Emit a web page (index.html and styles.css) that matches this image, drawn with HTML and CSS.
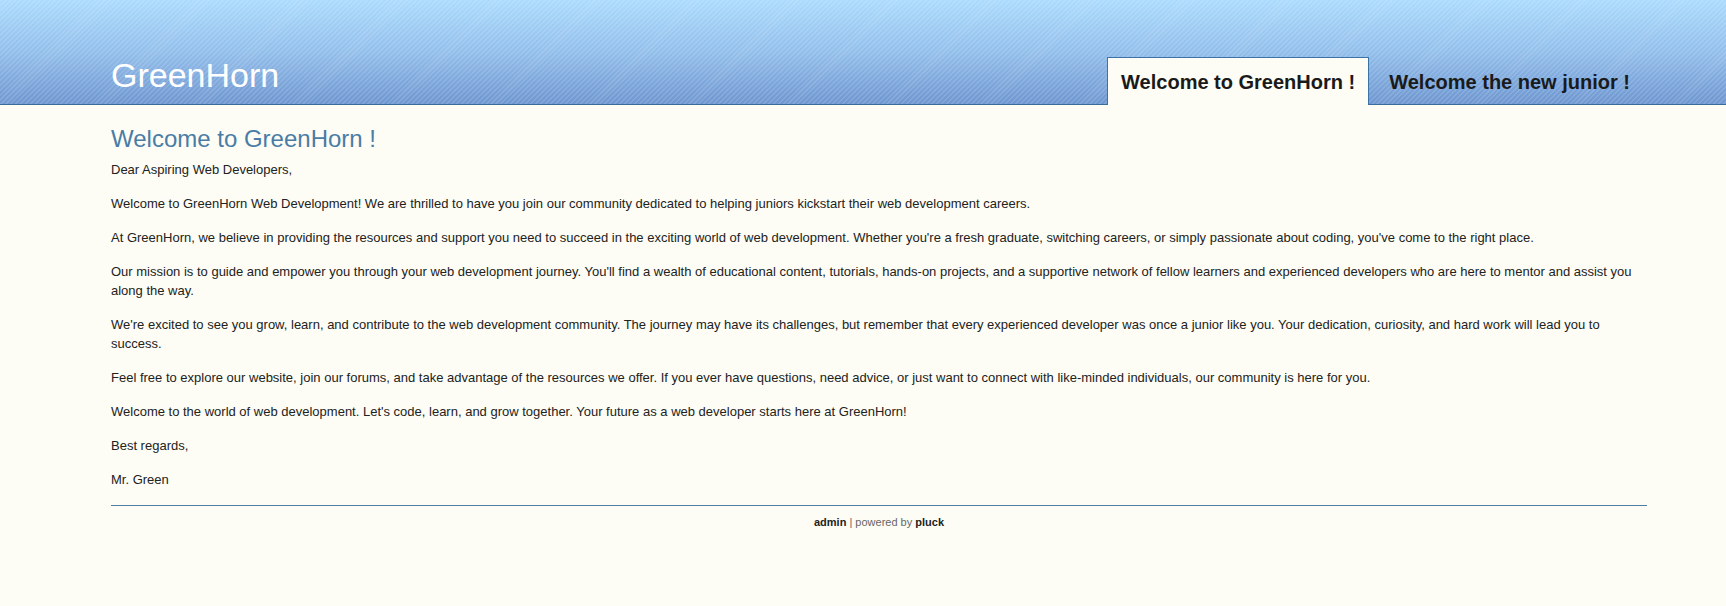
FILE: index.html
```html
<!DOCTYPE html>
<html>
<head>
<meta charset="utf-8">
<title>Welcome to GreenHorn !</title>
<link rel="stylesheet" href="styles.css">
</head>
<body>
<div class="header">
  <div class="header-inner">
    <div class="logo">GreenHorn</div>
    <ul class="tabs">
      <li class="tab active">Welcome to GreenHorn !</li>
      <li class="tab">Welcome the new junior !</li>
    </ul>
  </div>
</div>
<div class="main">
  <h1 class="title">Welcome to GreenHorn !</h1>
  <p>Dear Aspiring Web Developers,</p>
  <p>Welcome to GreenHorn Web Development! We are thrilled to have you join our community dedicated to helping juniors kickstart their web development careers.</p>
  <p>At GreenHorn, we believe in providing the resources and support you need to succeed in the exciting world of web development. Whether you're a fresh graduate, switching careers, or simply passionate about coding, you've come to the right place.</p>
  <p>Our mission is to guide and empower you through your web development journey. You'll find a wealth of educational content, tutorials, hands-on projects, and a supportive network of fellow learners and experienced developers who are here to mentor and assist you along the way.</p>
  <p>We're excited to see you grow, learn, and contribute to the web development community. The journey may have its challenges, but remember that every experienced developer was once a junior like you. Your dedication, curiosity, and hard work will lead you to success.</p>
  <p>Feel free to explore our website, join our forums, and take advantage of the resources we offer. If you ever have questions, need advice, or just want to connect with like-minded individuals, our community is here for you.</p>
  <p>Welcome to the world of web development. Let's code, learn, and grow together. Your future as a web developer starts here at GreenHorn!</p>
  <p>Best regards,</p>
  <p>Mr. Green</p>
  <div class="footer"><b>admin</b> | powered by <b>pluck</b></div>
</div>
</body>
</html>
```
FILE: styles.css
```css
html, body {
  margin: 0;
  padding: 0;
}
body {
  background: #fdfdf5;
  font-family: "Liberation Sans", Arial, sans-serif;
  color: #222;
}
.header {
  height: 104px;
  border-bottom: 1px solid #3a6c9b;
  background:
    repeating-linear-gradient(135deg, rgba(255,255,255,0.13) 0px, rgba(255,255,255,0.13) 1.5px, rgba(255,255,255,0) 1.5px, rgba(255,255,255,0) 3.5px),
    linear-gradient(to bottom, #abdbfd 0%, #93bfeb 50%, #6f97d1 100%);
}
.header-inner {
  height: 104px;
  display: flex;
  align-items: flex-end;
  justify-content: space-between;
  padding: 0 79px 0 111px;
}
.logo {
  color: #fff;
  font-size: 34px;
  line-height: 40px;
  padding-bottom: 9px;
}
.tabs {
  list-style: none;
  display: flex;
  gap: 6px;
  margin: 0 3px -1px 0;
  padding: 0;
}
.tab {
  font-family: "Liberation Sans", Arial, sans-serif;
  font-weight: bold;
  font-size: 20px;
  color: #1a1a1a;
  height: 48px;
  line-height: 48px;
  padding: 0 13px;
  border: 1px solid transparent;
  border-bottom: none;
  box-sizing: border-box;
}
.tab.active {
  background: #fdfdf5;
  border-color: #3b73a8;
}
.main {
  margin: 0 79px 0 111px;
  padding-top: 20px;
  font-size: 13px;
  line-height: 18.6px;
}
.title {
  font-size: 24px;
  font-weight: normal;
  color: #4a7ca5;
  line-height: 28px;
  margin: 0 0 8px 0;
}
.main p {
  margin: 0 0 15.5px 0;
}
.footer {
  border-top: 1px solid #4f7ea5;
  text-align: center;
  font-size: 11px;
  color: #666;
  padding-top: 9px;
  line-height: 14px;
}
.footer b {
  color: #222;
}
```
